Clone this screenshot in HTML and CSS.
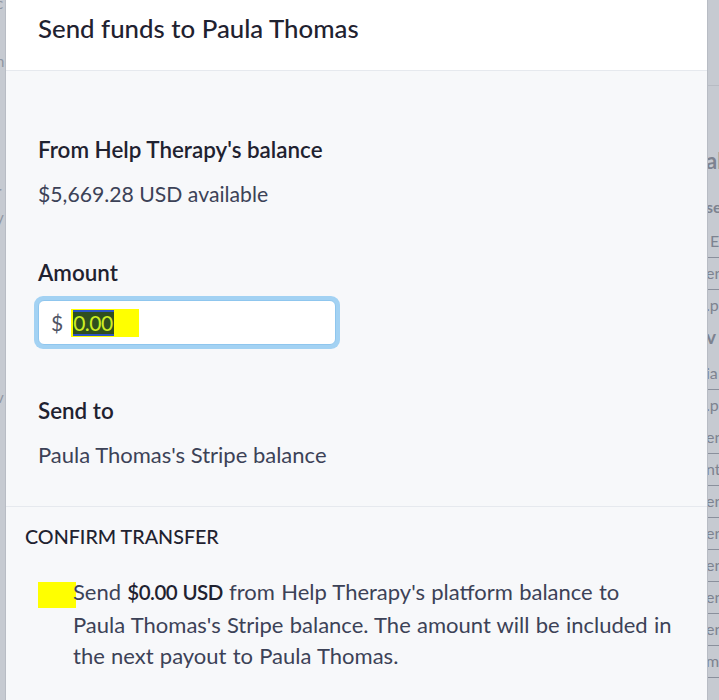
FILE: index.html
```html
<!DOCTYPE html>
<html>
<head>
<meta charset="utf-8">
<link rel="stylesheet" href="styles.css">
</head>
<body>
<div class="page">
  <div class="edge edge-left">
    <span class="frag f1">c</span>
    <span class="frag f2">n</span>
    <span class="frag f3">r</span>
    <span class="frag f4">y</span>
    <span class="frag f5">v</span>
  </div>
  <div class="modal">
    <div class="modal-header">
      <h1 class="title">Send funds to Paula Thomas</h1>
    </div>
    <div class="modal-body">
      <div class="field">
        <div class="label">From Help Therapy's balance</div>
        <div class="value">$5,669.28 USD available</div>
      </div>
      <div class="field field-amount">
        <div class="label">Amount</div>
        <div class="input-ring">
          <div class="input">
            <span class="currency">$</span>
            <span class="mark"><span class="sel">0.00</span></span>
          </div>
        </div>
      </div>
      <div class="field field-send">
        <div class="label">Send to</div>
        <div class="value">Paula Thomas's Stripe balance</div>
      </div>
    </div>
    <div class="modal-confirm">
      <div class="confirm-title">CONFIRM TRANSFER</div>
      <div class="confirm-row">
        <span class="checkbox"></span>
        <p class="confirm-text">Send <strong>$0.00 USD</strong> from Help Therapy's platform balance to<br>Paula Thomas's Stripe balance. The amount will be included in the next payout to Paula Thomas.</p>
      </div>
    </div>
  </div>
  <div class="edge edge-right">
    <div class="bg-top"></div>
    <div class="bg-lines">
      <div class="bl big">al</div>
      <div class="bl bold">se</div>
      <div class="bl u">&nbsp;E</div>
      <div class="bl u">en</div>
      <div class="bl">.p</div>
      <div class="bl big2">v</div>
      <div class="bl u">ia</div>
      <div class="bl">.p</div>
      <div class="bl u">en</div>
      <div class="bl u">nt</div>
      <div class="bl u">en</div>
      <div class="bl u">en</div>
      <div class="bl u">en</div>
      <div class="bl u">en</div>
      <div class="bl u">en</div>
      <div class="bl u">m</div>
    </div>
  </div>
</div>
</body>
</html>
```
FILE: styles.css
```css
* { box-sizing: border-box; }
html, body {
  margin: 0;
  padding: 0;
  width: 719px;
  height: 700px;
  overflow: hidden;
  background: #c8ccd3;
  font-family: "Lato", "Noto Sans", sans-serif;
}
.page {
  display: flex;
  height: 700px;
}
.edge {
  background: #c6cad1;
  overflow: hidden;
  position: relative;
}
.edge-left {
  width: 6px;
  flex: none;
  border-right: 1px solid #b8bcc4;
}
.frag {
  position: absolute;
  left: -4px;
  color: #9096a2;
  font-size: 15px;
}
.f1 { top: -6px; }
.f2 { top: 52px; }
.f3 { top: 182px; }
.f4 { top: 208px; }
.f5 { top: 388px; }

.modal {
  width: 701px;
  flex: none;
  background: #f7f8fa;
  display: flex;
  flex-direction: column;
}
.modal-header {
  height: 71px;
  background: #ffffff;
  border-bottom: 1px solid #e6e9ee;
  padding: 13px 0 0 32px;
}
.title {
  margin: 0;
  font-size: 25.8px;
  line-height: 30px;
  font-weight: 500;
  color: #1f2230;
}
.modal-body {
  padding: 66px 32px 0 32px;
  height: 436px;
  border-bottom: 1px solid #e6e9ee;
}
.field { display: flex; flex-direction: column; }
.label {
  font-size: 22.4px;
  font-weight: 600;
  color: #1f2230;
  line-height: 26px;
}
.value {
  font-size: 21.2px;
  color: #3c4257;
  line-height: 26px;
  margin-top: 18px;
}
.field-send .value { font-size: 22px; }
.field-amount { margin-top: 53px; }
.input-ring {
  margin-top: 10px;
  margin-left: -4px;
  width: 306px;
  height: 53px;
  border-radius: 9px;
  background: #a3d2f3;
  padding: 4px;
}
.input {
  height: 45px;
  background: #ffffff;
  border-radius: 6px;
  border: 1px solid #8fc6ee;
  display: flex;
  align-items: center;
  padding-left: 12px;
  font-size: 21px;
}
.currency {
  color: #505565;
  margin-right: 8px;
}
.mark {
  background: #ffff00;
  width: 68px;
  height: 28px;
  display: flex;
  align-items: center;
  padding-left: 2px;
}
.sel {
  background: #2f4f1f;
  color: #ccee22;
  height: 26px;
  line-height: 26px;
  border-top: 2px solid #2b53c4;
  border-bottom: 2px solid #2b53c4;
  display: inline-flex;
  align-items: center;
  letter-spacing: -0.5px;
  padding-right: 1px;
}
.field-send { margin-top: 49px; }

.modal-confirm {
  padding: 17px 32px 0 19px;
  flex: 1;
}
.confirm-title {
  font-size: 19.7px;
  font-weight: 500;
  color: #1f2230;
  line-height: 26px;
}
.confirm-row {
  display: flex;
  margin-top: 26px;
  padding-left: 13px;
}
.checkbox {
  flex: none;
  width: 38px;
  height: 26px;
  margin-top: 6px;
  background: #ffff00;
  margin-right: -3px;
}
.confirm-text {
  margin: 0;
  width: 616px;
  font-size: 22px;
  word-spacing: 0.6px;
  line-height: 31.5px;
  color: #3c4257;
}
.confirm-text strong {
  color: #1f2230;
  font-weight: 600;
  font-size: 20.5px;
  letter-spacing: -0.5px;
}

.edge-right {
  width: 12px;
  flex: none;
  border-left: 1px solid #b8bcc4;
}
.bg-top {
  height: 86px;
  border-bottom: 1px solid #b7bbc3;
}
.bg-lines {
  margin-left: -2px;
  padding-top: 60px;
  color: #7d8390;
  font-size: 16px;
}
.bl {
  height: 32px;
  line-height: 30px;
  white-space: nowrap;
}
.bl.big { font-size: 22px; font-weight: 700; height: 46px; }
.bl.bold { font-weight: 700; height: 34px; }
.bl.big2 { font-weight: 700; font-size: 19px; height: 36px; }
.bl.u { border-bottom: 1px solid #8a909c; }
```
